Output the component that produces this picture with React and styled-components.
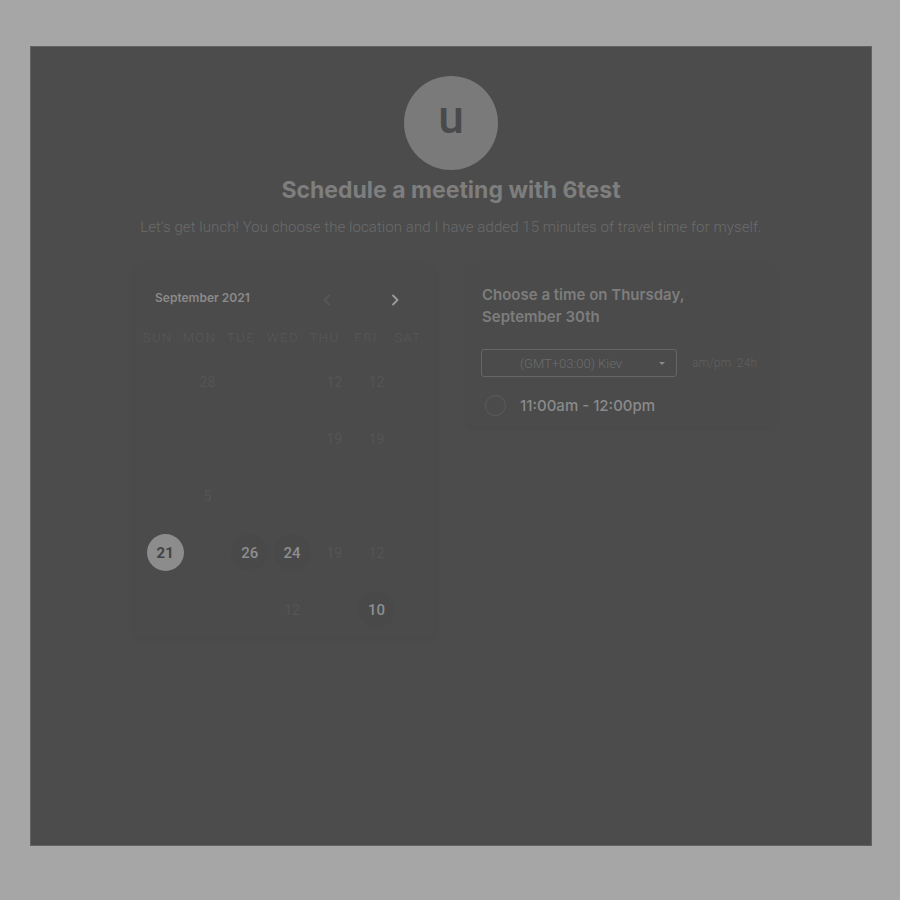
import styled, { createGlobalStyle } from 'styled-components'

const GlobalStyle = createGlobalStyle`
    body{
        margin: 0;
        background: #a6a6a6;
        font-family: "Roboto", "Liberation Sans", sans-serif;
    }
`

const Frame = styled.div`
    margin: 46px 0 0 30px;
    width: 842px;
    height: 800px;
    box-sizing: border-box;
    background: #4c4c4c;
    border: 1px solid #626262;
    display: flex;
    flex-direction: column;
    align-items: center;
    padding-top: 29px;
`

const Avatar = styled.div`
    inline-size: 94px;
    aspect-ratio: 1/1;
    border-radius: 50%;
    background: #7a7a7a;
    color: #4a4a4a;
    display: flex;
    align-items: center;
    justify-content: center;
    font-size: 46px;
    font-weight: 500;
    font-family: "Roboto", sans-serif;
    line-height: 1;
    padding-bottom: 12px;
    box-sizing: border-box;
`

const Title = styled.h1`
    margin: 7px 0 0;
    font-family: "Inter", "Roboto", sans-serif;
    font-size: 23px;
    line-height: 27px;
    font-weight: 700;
    color: #7e7e7e;
`

const Description = styled.p`
    margin: 13px 0 0;
    font-size: 15px;
    line-height: 20px;
    font-weight: 300;
    letter-spacing: 0.08px;
    color: #6b6b6b;
`

const Columns = styled.div`
    align-self: flex-start;
    margin: 29px 0 0 104px;
    display: flex;
    align-items: flex-start;
    gap: 33px;
    font-family: "Inter", "Liberation Sans", sans-serif;
`

const Card = styled.div`
    width: ${p => p.$width}px;
    box-sizing: border-box;
    background: #4b4b4b;
    box-shadow: 0 1px 6px rgba(0,0,0,0.05);
    border-radius: 3px;
`

const CalendarCard = styled(Card)`
    height: 372px;
    padding-top: 22px;
`

const MonthBar = styled.div`
    display: flex;
    align-items: center;
    height: 18px;
    padding-left: 20px;

    .month{
        font-size: 12px;
        font-weight: 600;
        color: #8a8a8a;
        width: 167px;
    }
`

const NavButton = styled.span`
    display: flex;
    width: 10px;
    margin-top: 6px;
    color: ${p => p.$active ? '#9c9c9c' : '#575757'};
    margin-left: ${p => p.$gap || 0}px;
`

const WeekRow = styled.div`
    display: grid;
    grid-template-columns: repeat(7, 41.7px);
    margin: 24px 0 0 2px;

    span{
        text-align: center;
        font-size: 13px;
        font-weight: 300;
        letter-spacing: 1.5px;
        color: #585858;
        font-family: "Roboto", sans-serif;
    }
`

const DayGrid = styled.div`
    display: grid;
    grid-template-columns: repeat(7, 42.3px);
    grid-auto-rows: 57px;
    margin: 8px 0 0 9px;
`

const Day = styled.span`
    display: flex;
    align-items: center;
    justify-content: center;
    font-size: 14px;
    font-family: "Roboto", sans-serif;
    color: #555555;

    b{
        inline-size: 37px;
        aspect-ratio: 1/1;
        border-radius: 50%;
        display: flex;
        align-items: center;
        justify-content: center;
        font-weight: ${p => p.$selected ? 700 : 500};
        font-size: 15px;
        background: ${p => p.$selected ? '#8c8c8c' : '#494949'};
        color: ${p => p.$selected ? '#434343' : '#8e8e8e'};
    }
`

const TimeCard = styled(Card)`
    padding: 18px 14px 11px 13px;
`

const TimeTitle = styled.h2`
    margin: 0;
    font-size: 15px;
    line-height: 22px;
    font-weight: 600;
    color: #7d7d7d;
    padding-left: 1px;
`

const ZoneRow = styled.div`
    display: flex;
    align-items: center;
    margin-top: 21px;
    gap: 15px;

    .format{
        font-size: 12px;
        color: #606060;
        font-family: "Roboto", sans-serif;
        font-weight: 300;
        word-spacing: 3px;
    }
`

const ZoneSelect = styled.div`
    width: 196px;
    height: 28px;
    box-sizing: border-box;
    border: 1px solid #666666;
    border-radius: 3px;
    display: flex;
    align-items: center;
    justify-content: center;
    padding-right: 16px;
    position: relative;
    font-family: "Roboto", sans-serif;
    font-size: 13px;
    font-weight: 300;
    color: #6c6c6c;

    &::after{
        content: '';
        position: absolute;
        right: 11px;
        top: 12px;
        border-left: 3px solid transparent;
        border-right: 3px solid transparent;
        border-top: 3px solid #8a8a8a;
    }
`

const Slot = styled.div`
    display: flex;
    align-items: center;
    gap: 14px;
    margin-top: 18px;
    padding-left: 4px;

    .radio{
        inline-size: 21px;
        aspect-ratio: 1/1;
        border-radius: 50%;
        border: 1px solid #5c5c5c;
        box-sizing: border-box;
    }

    .label{
        font-size: 15px;
        font-weight: 500;
        color: #8a8a8a;
    }
`

const Chevron = ({ dir }) => (
    <svg width="10" height="12" viewBox="0 0 10 12" fill="none" stroke="currentColor" strokeWidth="1.8" strokeLinecap="round" strokeLinejoin="round">
        {dir === 'left' ? <path d="M7 1.5 2.5 6 7 10.5" /> : <path d="M3 1.5 7.5 6 3 10.5" />}
    </svg>
)

const days = [
    ['', '28', '', '', '12', '12', ''],
    ['', '', '', '', '19', '19', ''],
    ['', '5', '', '', '', '', ''],
    [{ n: '21', sel: true }, '', { n: '26' }, { n: '24' }, '19', '12', ''],
    ['', '', '', '12', '', { n: '10' }, ''],
]

function App() {
    return (
        <>
            <GlobalStyle />
            <Frame>
                <Avatar>u</Avatar>
                <Title>Schedule a meeting with 6test</Title>
                <Description>Let's get lunch! You choose the location and I have added 15 minutes of travel time for myself.</Description>
                <Columns>
                    <CalendarCard $width={300}>
                        <MonthBar>
                            <span className='month'>September 2021</span>
                            <NavButton><Chevron dir='left' /></NavButton>
                            <NavButton $active $gap={58}><Chevron dir='right' /></NavButton>
                        </MonthBar>
                        <WeekRow>
                            {['SUN', 'MON', 'TUE', 'WED', 'THU', 'FRI', 'SAT'].map(d => <span key={d}>{d}</span>)}
                        </WeekRow>
                        <DayGrid>
                            {days.flat().map((d, i) => typeof d === 'string'
                                ? <Day key={i}>{d}</Day>
                                : <Day key={i} $selected={d.sel}><b>{d.n}</b></Day>
                            )}
                        </DayGrid>
                    </CalendarCard>
                    <TimeCard $width={307}>
                        <TimeTitle>Choose a time on Thursday,<br />September 30th</TimeTitle>
                        <ZoneRow>
                            <ZoneSelect>(GMT+03:00) Kiev</ZoneSelect>
                            <span className='format'>am/pm 24h</span>
                        </ZoneRow>
                        <Slot>
                            <span className='radio'></span>
                            <span className='label'>11:00am - 12:00pm</span>
                        </Slot>
                    </TimeCard>
                </Columns>
            </Frame>
        </>
    )
}

export default App
